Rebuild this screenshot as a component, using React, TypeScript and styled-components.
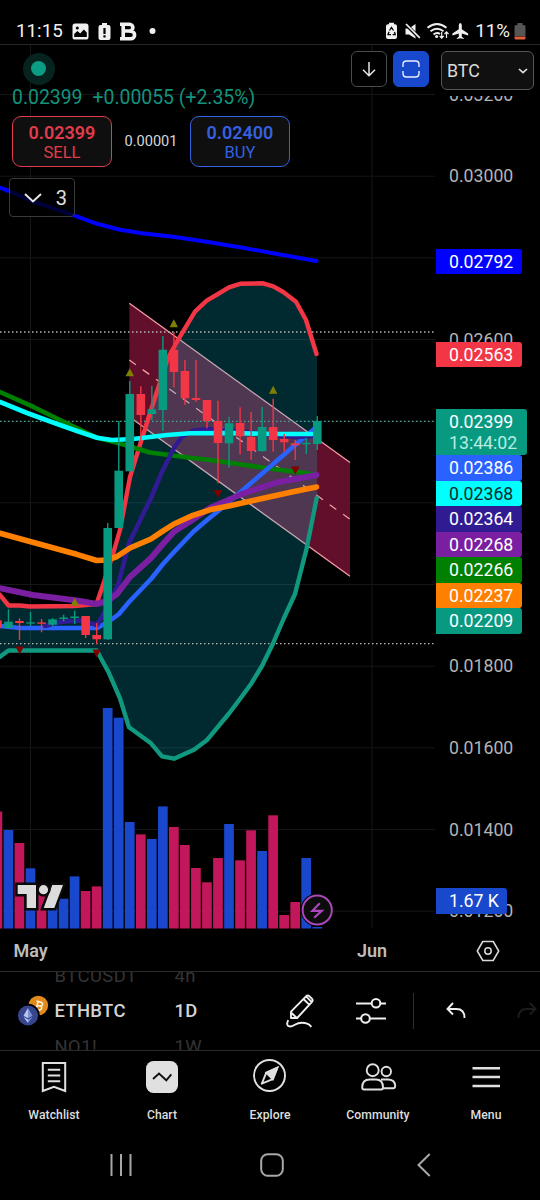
import React from 'react';
import styled, { createGlobalStyle } from 'styled-components';

const GlobalStyle = createGlobalStyle`
  * { box-sizing: border-box; }
  body { margin: 0; background: #000; font-family: Roboto, sans-serif; color: #dbdbdb; }
  svg { display: block; flex: none; }
`;

const Screen = styled.div`
  width: 540px;
  height: 1200px;
  display: flex;
  flex-direction: column;
  background: #000;
  overflow: hidden;
`;

const StatusBar = styled.div`
  height: 44px;
  padding: 19px 14px 0 16px;
  display: flex;
  justify-content: space-between;
  align-items: flex-start;
  font-size: 18.8px;
  line-height: 24px;
  color: #f0f0f0;
`;

const StatusGroup = styled.div<{ $gap: number }>`
  display: flex;
  align-items: center;
  gap: ${(p) => p.$gap}px;
  height: 24px;
`;

const ChartArea = styled.main`
  height: 885px;
  display: grid;
  grid-template-columns: 436px 104px;
  grid-template-rows: 885px;
  border-top: 1px solid #262626;
  overflow: hidden;
`;

const Plot = styled.svg`
  grid-area: 1 / 1;
  width: 436px;
  height: 885px;
`;

const Legend = styled.section`
  grid-area: 1 / 1;
  z-index: 1;
  padding: 6px 7px 0 9px;
  display: flex;
  flex-direction: column;
  align-items: flex-start;
`;

const LegendTop = styled.div`
  width: 100%;
  height: 36px;
  display: flex;
  align-items: center;
  gap: 6px;
`;

const MarketStatus = styled.div`
  width: 32px;
  height: 32px;
  margin: -1px auto 0 13.5px;
  border-radius: 50%;
  background: #06231f;
  display: grid;
  place-items: center;
  &::after {
    content: '';
    width: 15px;
    height: 15px;
    border-radius: 50%;
    background: #0b9c84;
  }
`;

const ToolButton = styled.button<{ $active?: boolean }>`
  width: 36px;
  height: 36px;
  padding: 0;
  border-radius: 6px;
  border: 1px solid ${(p) => (p.$active ? '#1848cc' : '#4c4c4c')};
  background: ${(p) => (p.$active ? '#1848cc' : '#000')};
  display: grid;
  place-items: center;
`;

const Quote = styled.div`
  margin: -1px 0 0 3px;
  height: 24px;
  line-height: 24px;
  font-size: 19.4px;
  display: flex;
  gap: 10px;
  color: #13937d;
`;

const TradeRow = styled.div`
  margin: 6px 0 0 3px;
  display: flex;
`;

const TradeButton = styled.button<{ $color: string }>`
  width: 100px;
  height: 51px;
  padding: 1px 0 0;
  border: 1.5px solid ${(p) => p.$color};
  border-radius: 9px;
  background: #0f0f0f;
  color: ${(p) => p.$color};
  font: 400 16.5px/20px Roboto, sans-serif;
  display: flex;
  flex-direction: column;
  align-items: center;
  justify-content: center;
  strong { font-size: 18px; font-weight: 600; line-height: 21px; }
`;

const Spread = styled.span`
  width: 78px;
  text-align: center;
  font-size: 14.6px;
  line-height: 51px;
  color: #d6d6d6;
`;

const IndicatorToggle = styled.button`
  width: 66px;
  height: 39px;
  margin-top: 11px;
  padding: 0 7px 0 14px;
  border: 1px solid #3a3a3a;
  border-radius: 4px;
  background: rgba(0, 0, 0, 0.78);
  color: #e0e0e0;
  font: 400 20px/36px Roboto, sans-serif;
  display: flex;
  align-items: center;
  justify-content: space-between;
`;

const PriceScale = styled.aside`
  grid-area: 1 / 2;
  display: grid;
  grid-template: 885px / 104px;
  font-size: 17.7px;
`;

const Ticks = styled.div`
  grid-area: 1 / 1;
  padding: 9.7px 0 0 13px;
  display: flex;
  flex-direction: column;
  color: #b4b4b4;
`;

const Tick = styled.span`
  height: 81.67px;
  line-height: 81.67px;
  flex: none;
`;

const Tags = styled.div`
  grid-area: 1 / 1;
  z-index: 1;
  display: flex;
  flex-direction: column;
  align-items: flex-start;
`;

const Tag = styled.div<{ $bg: string; $gap?: number; $fg?: string; $w?: number }>`
  width: ${(p) => p.$w ?? 86}px;
  height: 25.5px;
  margin-top: ${(p) => p.$gap ?? 0}px;
  padding-left: 13px;
  border-radius: 0 3px 3px 0;
  background: ${(p) => p.$bg};
  color: ${(p) => p.$fg ?? '#fff'};
  line-height: 26.6px;
  flex: none;
`;

const LastPriceTag = styled(Tag)`
  height: 46.5px;
  padding-top: 3.6px;
  line-height: 21px;
  small { display: block; font-size: 17.7px; color: #b9ece0; }
`;

const CurrencyHeader = styled.div`
  grid-area: 1 / 1;
  z-index: 2;
  height: 51px;
  padding: 6px 0 0 5px;
  background: #000;
`;

const CurrencySelect = styled.button`
  width: 93px;
  height: 39px;
  padding: 0 5px;
  border: 1px solid #555;
  border-radius: 6px;
  background: #101010;
  color: #dcdcdc;
  font: 400 17.8px/36px Roboto, sans-serif;
  display: flex;
  align-items: center;
  justify-content: space-between;
`;

const TimeAxis = styled.div`
  height: 42px;
  padding-top: 1px;
  display: grid;
  grid-template-columns: 61px 1fr 128px 104px;
  align-items: center;
  justify-items: center;
  font-size: 18px;
  font-weight: 600;
  color: #bdbdbd;
`;

const MonthLabel = styled.span<{ $col: number }>`
  grid-column: ${(p) => p.$col};
`;

const Toolbar = styled.div`
  height: 79px;
  border-top: 1px solid #2a2a2a;
  display: flex;
  align-items: center;
  overflow: hidden;
`;

const CoinPair = styled.div`
  width: 54.5px;
  flex: none;
  padding-left: 17px;
`;

const Wheel = styled.div<{ $w: number }>`
  width: ${(p) => p.$w}px;
  height: 78px;
  flex: none;
  display: flex;
  flex-direction: column;
  justify-content: center;
  overflow: hidden;
`;

const WheelItem = styled.span<{ $on?: boolean }>`
  height: 35.5px;
  line-height: 35.5px;
  flex: none;
  letter-spacing: ${(p) => (p.$on ? 0.35 : 0.5)}px;
  font-size: 18.4px;
  font-weight: ${(p) => (p.$on ? 500 : 400)};
  color: ${(p) => (p.$on ? '#d4d4d4' : '#343434')};
`;

const Tools = styled.div`
  flex: none;
  display: flex;
  align-items: center;
`;

const ToolSlot = styled.div<{ $w: number }>`
  width: ${(p) => p.$w}px;
  flex: none;
  display: flex;
  justify-content: center;
`;

const Divider = styled.i`
  width: 1px;
  height: 36px;
  background: #2e2e2e;
`;

const BottomNav = styled.nav`
  height: 80px;
  border-top: 1px solid #2a2a2a;
  display: grid;
  grid-template-columns: repeat(5, 108px);
`;

const NavItem = styled.div`
  padding-top: 6px;
  display: flex;
  flex-direction: column;
  align-items: center;
  gap: 10px;
  font-size: 12.2px;
  font-weight: 500;
  letter-spacing: 0.05px;
  line-height: 16px;
  color: #dedede;
`;

const SystemNav = styled.div`
  height: 70px;
  display: grid;
  grid-template-columns: 196px 106px 198px;
  padding-left: 23px;
  justify-items: center;
  align-items: center;
`;

const BAR_STEP = 11.03;
const LAST_X = 317.3;
const barX = (k: number) => LAST_X - BAR_STEP * k;
const GREEN = '#089981';
const RED = '#f23645';

/* bars back from the latest, top y, rising */
const volumes: [number, number, boolean][] = [
  [29, 811.5, false], [28, 830, true], [27, 843, false], [26, 868.3, true], [25, 890, false],
  [24, 895, true], [23, 898.7, true], [22, 876.4, true], [21, 891, false], [20, 886.4, false],
  [19, 708, true], [18, 717.7, true], [17, 822, true], [16, 834.4, false], [15, 839, true],
  [14, 806.4, true], [13, 827, false], [12, 845, false], [11, 868, false], [10, 882.3, false],
  [9, 858, false], [8, 824, true], [7, 860.3, false], [6, 830.3, false], [5, 851, true],
  [4, 815.3, false], [3, 915, false], [2, 902, false], [1, 858, true], [0, 927, true],
];

/* bars back from the latest, high, body top, body bottom, low, rising */
const candles: [number, number, number, number, number, boolean][] = [
  [29, 620, 620.3, 627.7, 628, false], [28, 609.3, 621.7, 628, 628, true],
  [27, 618.3, 621, 623, 640, false], [26, 612, 622.3, 623.6, 626, true],
  [25, 619, 622.4, 623.8, 632.3, false], [24, 618, 619.3, 624.7, 626.3, true],
  [23, 614.7, 617.5, 619, 621.3, true], [22, 610.7, 616.5, 618, 624, true],
  [21, 616, 616, 635, 638, false], [20, 623, 635, 639.3, 644, false],
  [19, 523, 528, 639.3, 640, true], [18, 421, 470.7, 528, 528, true],
  [17, 381, 394, 471.3, 471.3, true], [16, 386.3, 394, 415, 441, false],
  [15, 386, 409.3, 414, 420, true], [14, 336, 349.7, 410, 431, true],
  [13, 332, 349.7, 372, 387.3, false], [12, 360, 371, 398.3, 405, false],
  [11, 360, 398, 400, 402, false], [10, 400, 400, 421, 428.3, false],
  [9, 400.7, 421, 443, 483.3, false], [8, 416.7, 423.3, 443.3, 467.7, true],
  [7, 407.3, 423, 436.3, 454.3, false], [6, 412, 437, 451, 460, false],
  [5, 407, 427, 451, 452, true], [4, 398.7, 427, 440, 451.7, false],
  [3, 434, 439, 442.3, 451.7, false], [2, 440, 443.3, 445.3, 460, false],
  [1, 438, 442.8, 444.2, 454, true], [0, 416, 421, 444, 450, true],
];

const upperBand =
  '-3,592 0,595 8.5,605.5 19.5,605.5 30,606.5 75,606 96.5,604 103.3,584 112.7,555 120,530 130,477 141.5,440 150,413 168,358 177,341.7 195,311.7 206.7,300.7 218,294 229,287.3 240,283.8 263,283.3 273.3,286.3 283.3,292 296,301.7 306,320 316.5,354';
const lowerBand =
  '-3,659 0,656.7 8.5,650.5 96.7,650.5 108.3,671.7 120,698.3 129,727.3 151,743.3 162,756.3 174,758.7 194,749.7 206.7,740.3 229,713.5 240,699 251,684 262,666 273,643.5 284,618 295,594 306.5,549 316.7,498';

const averages: { color: string; width: number; points: string }[] = [
  { color: '#0000ff', width: 4, points: '0,187.7 9,191 33,201.5 74,215.3 97,223.8 120,229.8 142,233.3 175,237 208,242 240,247.3 280,254.5 316.5,261' },
  { color: '#008000', width: 4.6, points: '-3,390.7 0,392 33,406.7 60,420 97,437.7 120,443.5 150,452.5 190,457.7 210,460 240,464.3 273,469 307,473.3 317,475.5' },
  { color: '#2962ff', width: 4.6, points: '-3,625.5 0,626 20,628 97,628 108,622 119,614 129,602 151,579 163,564 174,552 193,532 207,520 217,512 243,490 270,466.7 293,446.7 306,436 316.5,427' },
  { color: '#311b92', width: 4.6, points: '45,626 60,622 80,620.5 97,625 107,608 118,585 129,543 151,498 162,471.7 174,448 182,436.5 193,430.7 207,429 230,430 262,434 295,437 316.5,436' },
  { color: '#7b1fa2', width: 6, points: '-3,587.8 0,588.3 33,595 76.7,600.5 96.7,604 107,601 117,594 130,577 151,558 162,545 174,531.7 190,521.5 210,508 243,493.5 277,482.5 316.5,475' },
  { color: '#00ffff', width: 4.6, points: '-3,401 0,402 27,413 60,425 77,431 97,437.7 112,440 133,439 167,435 190,433.3 230,433 275,434 312,434' },
  { color: '#ff8000', width: 5.6, points: '-3,532.5 0,533.3 50,547 76.7,554.3 96.7,560.5 107,560 117,556.5 130,548 151,539 162,531.7 174,524 193,515.3 210,509.8 230,505.7 260,499 293,491.7 316.5,487' },
];

const gridRows = [94.5, 176.2, 257.8, 339.5, 421.2, 502.8, 584.5, 666.2, 747.8, 829.5, 911.2];
const peaks: [number, number][] = [[173.8, 323.3], [129.8, 372.2], [273.2, 389.8], [74.8, 601.8]];
const troughs: [number, number][] = [[218, 494], [295.3, 470.5], [19.7, 650.5], [96.7, 653.5]];

const Chart = () => (
  <Plot viewBox="0 45 436 885">
    <g fill="none" stroke="#161616" strokeWidth="1">
      {gridRows.map((y) => <line key={y} x1="0" x2="435" y1={y} y2={y} />)}
      <line x1="30.5" x2="30.5" y1="45" y2="928" />
      <line x1="372" x2="372" y1="45" y2="928" />
    </g>
    {volumes.map(([k, y, up]) => (
      <rect key={k} x={barX(k) - 4.9} y={y} width="9.7" height={928.5 - y} fill={up ? '#1a48cc' : '#c2185b'} />
    ))}
    <polygon points="129.3,303.3 350,462.5 350,576.3 129.3,416.8" fill="#610f2a" />
    <g fill="none" stroke="#f79aa4" strokeWidth="1.3">
      <line x1="129.3" y1="303.3" x2="350" y2="462.5" />
      <line x1="129.3" y1="416.8" x2="350" y2="576.3" />
      <line x1="129.3" y1="360" x2="350" y2="519.3" strokeDasharray="8.1 8.38" />
    </g>
    <polygon
      points={`${upperBand} 317,354 317,498 ${lowerBand.split(' ').reverse().join(' ')}`}
      fill="rgba(0,229,255,0.185)"
    />
    <g strokeWidth="1.3" strokeDasharray="1.5 2.5">
      <line x1="0" x2="434" y1="332" y2="332" stroke="#b8b8b8" />
      <line x1="0" x2="434" y1="421.3" y2="421.3" stroke="#4fa596" />
      <line x1="0" x2="434" y1="643.7" y2="643.7" stroke="#b8b8b8" />
    </g>
    <g fill="none" strokeLinejoin="round" strokeLinecap="round">
      <polyline points={upperBand} stroke={RED} strokeWidth="4.4" />
      <polyline points={lowerBand} stroke="#10997f" strokeWidth="4.4" />
      {averages.map((a) => (
        <polyline key={a.color} points={a.points} stroke={a.color} strokeWidth={a.width} />
      ))}
    </g>
    {candles.map(([k, high, top, bottom, low, up]) => (
      <g key={k} fill={up ? GREEN : RED}>
        <rect x={barX(k) - 0.7} y={high} width="1.4" height={low - high} />
        <rect x={barX(k) - 4.3} y={top} width="8.6" height={bottom - top} />
      </g>
    ))}
    {peaks.map(([x, y]) => (
      <polygon key={x} points={`${x},${y - 4} ${x + 4.2},${y + 4} ${x - 4.2},${y + 4}`} fill="#808000" />
    ))}
    {troughs.map(([x, y]) => (
      <polygon key={x} points={`${x},${y + 4} ${x + 4.2},${y - 4} ${x - 4.2},${y - 4}`} fill="#800000" />
    ))}
    <g fill="#dcdcdc" stroke="#0a0a0a" strokeWidth="5" paintOrder="stroke">
      <path d="M17.7 885H36v23h-9.3v-14h-9zM52.3 885H63l-8.7 23H43.7z" />
      <circle cx="43.5" cy="889.7" r="4.6" />
    </g>
    <circle cx="317.2" cy="910" r="16.5" fill="#000" />
    <circle cx="317.2" cy="910" r="14.6" fill="#0c0c0c" stroke="#ab47bc" strokeWidth="2" />
    <path d="M319.8 903.2l-7.4 7.6h9.4l-7.6 7" fill="none" stroke="#ab47bc" strokeWidth="2.2" strokeLinejoin="miter" />
  </Plot>
);

const tickLabels = ['0.03200', '0.03000', '', '0.02600', '', '', '', '0.01800', '0.01600', '0.01400', '0.01200'];

const App = () => (
  <>
    <GlobalStyle />
    <Screen>
      <StatusBar>
        <StatusGroup $gap={9}>
          <span>11:15</span>
          <svg width="17" height="17" viewBox="0 0 17 17">
            <rect x=".5" y=".5" width="16" height="16" rx="2.6" fill="#f0f0f0" />
            <circle cx="5.3" cy="5" r="1.5" fill="#000" />
            <path d="M2.2 14v-3l3.2-3 2.8 2.6 3.6-4.2 3 3V14z" fill="#000" />
          </svg>
          <svg width="13" height="17" viewBox="0 0 13 17">
            <path d="M4 0h5v2h1.5Q12.500 2 12.500 4v11q0 2-2 2h-8q-2 0-2-2V4q0-2 2-2H4z" fill="#f0f0f0" />
            <path d="M5.400 5h2.200v6H5.400zM5.400 12.200h2.200v2.200H5.400z" fill="#000" />
          </svg>
          <svg width="17" height="19" viewBox="0 0 17 19">
            <path d="M0 2.200h9.500a3.200 3.200 0 0 1 0 6.800H3M9.500 9.200h1.300a3.600 3.600 0 0 1 0 7.600H0M3.200 2v15" fill="none" stroke="#f0f0f0" strokeWidth="3.6" />
          </svg>
          <svg width="13" height="8" viewBox="0 0 13 8">
            <circle cx="6.500" cy="4" r="3" fill="#f0f0f0" />
          </svg>
        </StatusGroup>
        <StatusGroup $gap={4}>
          <svg width="86" height="20" viewBox="386 21 86 20">
            <path d="M390 22.700h5v1.600h1q2 0 2 2v10.700q0 2-2 2h-7q-2 0-2-2V26.300q0-2 2-2h1z" fill="#f0f0f0" />
            <path d="M390.500 30.500l2-3 2 3M395.500 32l.7 2.700h-2.600M392 34.700h-3l1-3" fill="none" stroke="#000" strokeWidth="1.3" />
            <path d="M406.500 28.500h3.500l6.500-4.500v14.500l-6.500-4h-3.500z" fill="#f0f0f0" />
            <path d="M405.500 23l15.500 15.500" stroke="#000" strokeWidth="3.500" />
            <path d="M407 24l13.800 13.800" stroke="#f0f0f0" strokeWidth="1.700" />
            <g fill="none" stroke="#f0f0f0" strokeWidth="1.900">
              <path d="M428.500 27.800q9.500-7.800 19 0M431.500 31.300q6.500-5.300 13 0M434.500 34.500q3.500-2.600 6.500-.5" />
            </g>
            <circle cx="437.600" cy="36.500" r="1.500" fill="#f0f0f0" />
            <path d="M442.700 32v6M440.700 36l2 2.200 2-2.200M447.500 38v-6M445.500 34l2-2.200 2 2.200" fill="none" stroke="#f0f0f0" strokeWidth="1.200" />
            <path d="M461.300 23q1.500 0 1.500 2.500v3.800l6.400 4.200v2l-6.400-2v3.200l2 1.500V39l-3.500-.8-3.500.8v-.8l2-1.500v-3.200l-6.400 2v-2l6.400-4.200v-3.800q0-2.500 1.500-2.500z" fill="#f0f0f0" />
          </svg>
          <span>11%</span>
          <svg width="12" height="17" viewBox="0 0 12 17">
            <path d="M3.500 0h5v2H10q1.500 0 1.500 1.500V13H.5V3.500Q.5 2 2 2h1.500z" fill="#555" />
            <path d="M.5 13.500h11V15q0 1.500-1.500 1.500H2Q.5 16.500.5 15z" fill="#e0603c" />
          </svg>
        </StatusGroup>
      </StatusBar>

      <ChartArea>
        <Chart />
        <Legend>
          <LegendTop>
            <MarketStatus />
            <ToolButton>
              <svg width="16" height="16" viewBox="0 0 16 16" fill="none" stroke="#e8e8e8" strokeWidth="1.500">
                <path d="M8 1v13.500M2 8.700l6 6 6-6" />
              </svg>
            </ToolButton>
            <ToolButton $active>
              <svg width="18" height="18" viewBox="0 0 18 18" fill="none" stroke="#e8eeff" strokeWidth="1.400">
                <path d="M1 7V4.500Q1 1 4.500 1h9Q17 1 17 4.500V7M1 11v2.500Q1 17 4.500 17h9q3.500 0 3.500-3.500V11" />
              </svg>
            </ToolButton>
          </LegendTop>
          <Quote>
            <span>0.02399</span>
            <span>+0.00055 (+2.35%)</span>
          </Quote>
          <TradeRow>
            <TradeButton $color="#e03c4b"><strong>0.02399</strong>SELL</TradeButton>
            <Spread>0.00001</Spread>
            <TradeButton $color="#3461e0"><strong>0.02400</strong>BUY</TradeButton>
          </TradeRow>
          <IndicatorToggle>
            <svg width="18" height="10" viewBox="0 0 18 10" fill="none" stroke="#e8e8e8" strokeWidth="1.900">
              <path d="M1 1l8 7.500L17 1" />
            </svg>
            3
          </IndicatorToggle>
        </Legend>
        <PriceScale>
          <CurrencyHeader>
            <CurrencySelect>
              BTC
              <svg width="10" height="6" viewBox="0 0 10 6" fill="none" stroke="#e0e0e0" strokeWidth="1.700">
                <path d="M1 1l4 3.700L9 1" />
              </svg>
            </CurrencySelect>
          </CurrencyHeader>
          <Ticks>
            {tickLabels.map((label, i) => <Tick key={i}>{label}</Tick>)}
          </Ticks>
          <Tags>
            <Tag $bg="#0000ff" $gap={203.7}>0.02792</Tag>
            <Tag $bg={RED} $gap={67.5}>0.02563</Tag>
            <LastPriceTag $bg={GREEN} $gap={41.6} $w={90.5}>0.02399<small>13:44:02</small></LastPriceTag>
            <Tag $bg="#2962ff">0.02386</Tag>
            <Tag $bg="#00ffff" $fg="#0c2a2a">0.02368</Tag>
            <Tag $bg="#311b92">0.02364</Tag>
            <Tag $bg="#7b1fa2">0.02268</Tag>
            <Tag $bg="#008000">0.02266</Tag>
            <Tag $bg="#ff8000">0.02237</Tag>
            <Tag $bg={GREEN}>0.02209</Tag>
            <Tag $bg="#1848cc" $gap={254.5} $w={71}>1.67 K</Tag>
          </Tags>
        </PriceScale>
      </ChartArea>

      <TimeAxis>
        <MonthLabel $col={1}>May</MonthLabel>
        <MonthLabel $col={3}>Jun</MonthLabel>
        <svg width="24" height="22" viewBox="0 0 24 22" fill="none" stroke="#dadada" strokeWidth="1.500">
          <path d="M6.800 1.500h10.400L22.700 11l-5.500 9.500H6.800L1.300 11z" strokeLinejoin="round" />
          <circle cx="12" cy="11" r="3.200" />
        </svg>
      </TimeAxis>

      <Toolbar>
        <CoinPair>
          <svg width="32" height="32" viewBox="0 0 32 32">
            <circle cx="21.300" cy="10.500" r="9.800" fill="#e08a1c" />
            <path d="M19.500 6l4.500 1.200q2.500 1 1.300 3-.6 1-2.200.7 2.200 1 1.400 2.800-1 2-3.700 1.200l-3.500-1M21 7l-2 7.500M20 10.500l3 .6" fill="none" stroke="#fff0d8" strokeWidth="1.500" />
            <circle cx="11" cy="20.500" r="11.800" fill="#000" />
            <circle cx="11" cy="20.500" r="10" fill="#37458f" />
            <path d="M11 13l-4.500 7.800L11 23.300z" fill="#b9c8ef" />
            <path d="M11 13l4.500 7.800L11 23.300z" fill="#7d92d2" />
            <path d="M6.500 22l4.500 6v-3.400z" fill="#b9c8ef" />
            <path d="M15.500 22L11 28v-3.400z" fill="#7d92d2" />
          </svg>
        </CoinPair>
        <Wheel $w={120}>
          <WheelItem>BTCUSDT</WheelItem>
          <WheelItem $on>ETHBTC</WheelItem>
          <WheelItem>NQ1!</WheelItem>
        </Wheel>
        <Wheel $w={90.5}>
          <WheelItem>4h</WheelItem>
          <WheelItem $on>1D</WheelItem>
          <WheelItem>1W</WheelItem>
        </Wheel>
        <Tools>
          <ToolSlot $w={70}>
            <svg width="30" height="36" viewBox="0 0 30 36" fill="none" stroke="#efefef" strokeWidth="1.900" strokeLinejoin="round">
              <path d="M6 25v-6.300L21 3.300q1.500-1.500 3.300-.2l2.600 2.600q1.500 1.600.1 3.200L12.200 25zM18.500 6l5.700 5.700M21.300 3.700l5.200 5.200M6 19.500l5.500 5.200" />
              <path d="M3.200 27.200q-2.700 6 1.800 6.300 2 0 4.800-1.800 4.700-2.800 10-1.700 5 .9 6.400 4" />
            </svg>
          </ToolSlot>
          <ToolSlot $w={71}>
            <svg width="32" height="28" viewBox="0 0 32 28" fill="none" stroke="#efefef" strokeWidth="2">
              <path d="M1 6.500h15.500M25.500 6.500H31M1 21.500h5M15 21.500h16" />
              <circle cx="21" cy="6.300" r="4.300" />
              <circle cx="10.500" cy="21.500" r="4.300" />
            </svg>
          </ToolSlot>
          <ToolSlot $w={14}><Divider /></ToolSlot>
          <ToolSlot $w={71}>
            <svg width="20" height="18" viewBox="0 0 20 18" fill="none" stroke="#efefef" strokeWidth="1.900">
              <path d="M7 1L1.500 7 7 12.500M1.500 7h9Q18.500 7 18.500 16" />
            </svg>
          </ToolSlot>
          <ToolSlot $w={72}>
            <svg width="20" height="18" viewBox="0 0 20 18" fill="none" stroke="#1c1c1c" strokeWidth="1.900">
              <path d="M13 1l5.500 6L13 12.500M18.500 7h-9Q1.500 7 1.500 16" />
            </svg>
          </ToolSlot>
        </Tools>
      </Toolbar>

      <BottomNav>
        <NavItem>
          <svg width="40" height="40" viewBox="0 0 40 40" fill="none" stroke="#e0e0e0" strokeWidth="2">
            <path d="M8.800 6h22.400v28L20 29.800 8.800 34zM13.800 12.700h12.400M13.800 18.400h12.400M13.800 24.200h12.400" />
          </svg>
          Watchlist
        </NavItem>
        <NavItem>
          <svg width="40" height="40" viewBox="0 0 40 40">
            <rect x="4" y="4" width="32" height="32" rx="7.500" fill="#e0e0e0" />
            <path d="M11 22l6-5.500 7.300 6.800 5-6" fill="none" stroke="#111" strokeWidth="1.900" />
          </svg>
          Chart
        </NavItem>
        <NavItem>
          <svg width="40" height="40" viewBox="0 0 40 40" fill="none" stroke="#e0e0e0" strokeWidth="1.900">
            <circle cx="19.500" cy="18.500" r="15.500" />
            <path d="M27.500 10.500l-4.700 11.700-11 4.500 4.500-11z" strokeLinejoin="round" />
            <path d="M27.500 10.500l-4.700 11.700-6.500-6.500z" fill="#e0e0e0" />
          </svg>
          Explore
        </NavItem>
        <NavItem>
          <svg width="40" height="40" viewBox="0 0 40 40" fill="none" stroke="#e0e0e0" strokeWidth="1.900">
            <circle cx="14.700" cy="13.200" r="6" />
            <circle cx="28.300" cy="14.500" r="4.700" />
            <path d="M4.200 30.500q0-8 7.500-8H18q7 0 7 8 0 2-1.800 2H6q-1.800 0-1.800-2z" />
            <path d="M23 22.500h7.500q6.500.5 6.700 6.300 0 2.500-2 2.500h-10" />
          </svg>
          Community
        </NavItem>
        <NavItem>
          <svg width="40" height="40" viewBox="0 0 40 40" fill="none" stroke="#e0e0e0" strokeWidth="2.400">
            <path d="M6.500 11.200H34M6.500 20H34M6.500 29H34" />
          </svg>
          Menu
        </NavItem>
      </BottomNav>

      <SystemNav>
        <svg width="24" height="24" viewBox="0 0 24 24" stroke="#a8a8a8" strokeWidth="2">
          <path d="M2.500 1v22M12 1v22M21.500 1v22" />
        </svg>
        <svg width="24" height="24" viewBox="0 0 24 24" fill="none" stroke="#a8a8a8" strokeWidth="2">
          <rect x="1.200" y="1.200" width="21.600" height="21.600" rx="6.500" />
        </svg>
        <svg width="14" height="24" viewBox="0 0 14 24" fill="none" stroke="#a8a8a8" strokeWidth="2">
          <path d="M12.700 1L1.500 12l11.200 11" />
        </svg>
      </SystemNav>
    </Screen>
  </>
);

export default App;
